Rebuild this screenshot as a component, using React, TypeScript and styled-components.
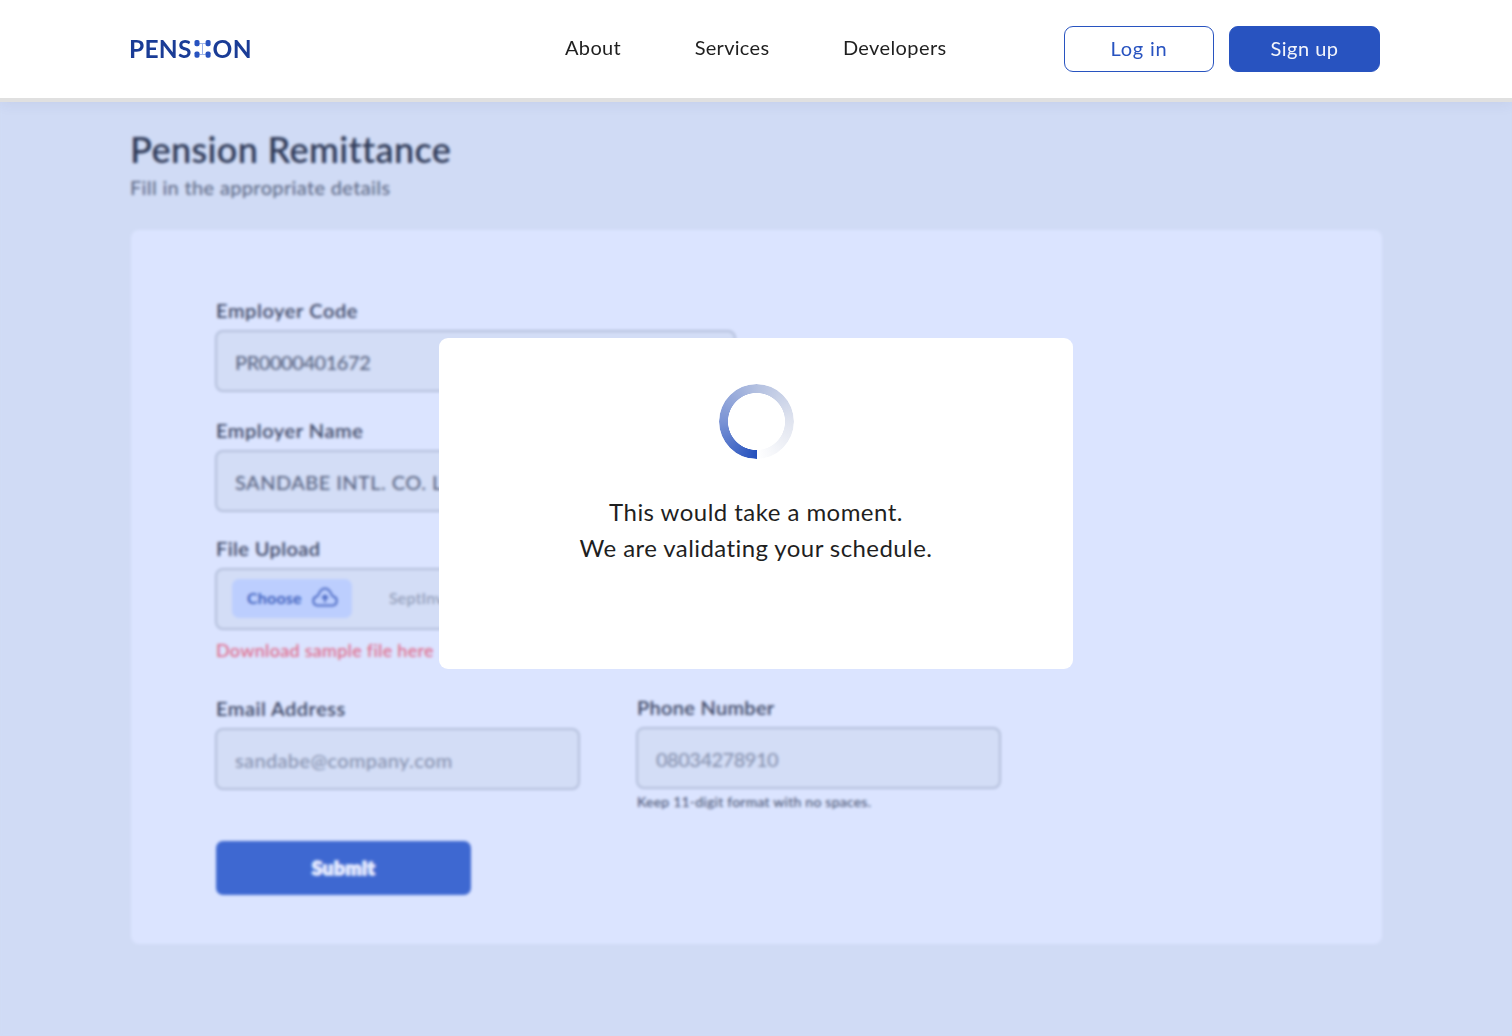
import React from "react";
import styled, { createGlobalStyle } from "styled-components";

const GlobalStyle = createGlobalStyle`
  *, *::before, *::after { box-sizing: border-box; }
  body {
    margin: 0;
    background: #d0dbf5;
    font-family: Lato, "Liberation Sans", sans-serif;
    font-variant-ligatures: none;
    color: #1f1f1f;
  }
  h1, p { margin: 0; }
`;

const Page = styled.div`
  position: relative;
  display: flex;
  flex-direction: column;
  height: 1036px;
  overflow: hidden;
`;

const Header = styled.header`
  position: relative;
  z-index: 2;
  display: flex;
  align-items: center;
  flex: none;
  height: 98px;
  padding: 0 132px 0 129px;
  background: #fff;
  box-shadow: 0 4px 0 #e0e0e0, 0 5px 14px rgba(60, 70, 110, 0.09);
`;

const Logo = styled.a`
  display: flex;
  align-items: center;
  flex: 0 0 436px;
  padding-bottom: 1px;
  font-size: 24.5px;
  line-height: 30px;
  font-weight: 700;
  letter-spacing: 0.3px;
  color: #1a3c96;
`;

const LogoMark = styled.svg`
  width: 17px;
  height: 18px;
  margin: 1px 1.5px 0 2.3px;
`;

const Nav = styled.nav`
  display: flex;
  gap: 73.5px;
  padding-bottom: 5px;
`;

const NavLink = styled.a<{ $track: number }>`
  font-size: 20px;
  line-height: 24px;
  letter-spacing: ${(p) => p.$track}px;
`;

const Actions = styled.div`
  display: flex;
  gap: 15px;
  margin-left: auto;
`;

const HeaderButton = styled.button<{ $primary?: boolean }>`
  width: ${(p) => (p.$primary ? 151 : 150)}px;
  height: 46px;
  padding: 0 0 3px;
  border: 1px solid #2853c0;
  border-radius: 9px;
  background: ${(p) => (p.$primary ? "#2853c0" : "#fff")};
  color: ${(p) => (p.$primary ? "#f3f5fb" : "#2853c0")};
  font: 400 20px/24px Lato, sans-serif;
  letter-spacing: ${(p) => (p.$primary ? 0.5 : 0.8)}px;
`;

const Main = styled.main`
  flex: 1;
  padding: 29px 130px 0 131px;
`;

const Title = styled.h1`
  margin-left: -1px;
  font-size: 36px;
  line-height: 44px;
  font-weight: 600;
  letter-spacing: 0.35px;
  color: #303b59;
`;

const Subtitle = styled.p`
  margin: 4px 0 31px -1px;
  font-size: 20px;
  line-height: 24px;
  font-weight: 500;
  letter-spacing: 0.33px;
  color: #606b88;
`;

const Panel = styled.form`
  display: flex;
  flex-direction: column;
  align-items: flex-start;
  height: 714px;
  margin-left: -0.5px;
  padding: 68px 85px 0 85.5px;
  border-radius: 8px;
  background: #dbe4ff;
`;

const Field = styled.div<{ $width: number; $gap?: number }>`
  display: flex;
  flex-direction: column;
  width: ${(p) => p.$width}px;
  margin-bottom: ${(p) => p.$gap ?? 0}px;
`;

const Label = styled.label<{ $track: number }>`
  margin-bottom: 8px;
  font-size: 20px;
  line-height: 24px;
  font-weight: 600;
  letter-spacing: ${(p) => p.$track}px;
  color: #3f4967;
`;

const Input = styled.div<{ $track?: number; $placeholder?: boolean }>`
  display: flex;
  align-items: center;
  height: 62px;
  margin-left: -1px;
  padding: 2px 18px 0;
  border: 2px solid #b3beda;
  border-radius: 8px;
  background: #d3ddf6;
  white-space: nowrap;
  font-size: 20px;
  font-weight: 500;
  letter-spacing: ${(p) => p.$track ?? 0}px;
  color: ${(p) => (p.$placeholder ? "#8792af" : "#5a6582")};
`;

const FileInput = styled(Input)`
  padding: 0 15px 1px;
`;

const ChooseButton = styled.span`
  display: flex;
  align-items: center;
  gap: 10px;
  width: 120px;
  height: 39px;
  margin-right: 37px;
  padding: 0 14px 3px 15px;
  border-radius: 7px;
  background: #bccefe;
  font-size: 16px;
  font-weight: 700;
  letter-spacing: 0.2px;
  color: #4061bd;
`;

const FileName = styled.span`
  padding-bottom: 2px;
  font-size: 16px;
  font-weight: 500;
  letter-spacing: 0.2px;
  color: #8d98b4;
`;

const SampleLink = styled.a`
  margin: 9px 0 35px;
  font-size: 18px;
  line-height: 22px;
  font-weight: 500;
  letter-spacing: 0.28px;
  color: #e06888;
`;

const ContactRow = styled.div`
  display: flex;
  gap: 57px;
`;

const PhoneField = styled(Field)`
  margin-top: -1px;
`;

const Hint = styled.p`
  margin-top: 4px;
  font-size: 14px;
  line-height: 17px;
  font-weight: 500;
  letter-spacing: 0.22px;
  color: #4c5776;
`;

const Submit = styled.button`
  width: 255px;
  height: 54px;
  margin-top: 31px;
  padding: 0 0 1px;
  border: 0;
  border-radius: 7px;
  background: #3e68d1;
  color: #e4eaff;
  font: 900 19px/24px Lato, sans-serif;
  letter-spacing: 0.6px;
  -webkit-text-stroke: 1.6px #e4eaff;
`;

const Overlay = styled.div`
  position: absolute;
  inset: 98px 0 0;
  display: flex;
  justify-content: center;
  align-items: flex-start;
  padding-top: 240px;
  backdrop-filter: blur(1.6px);
`;

const Dialog = styled.section`
  display: flex;
  flex-direction: column;
  align-items: center;
  width: 634px;
  height: 331px;
  padding-top: 46px;
  border-radius: 9px;
  background: #fff;
`;

const Spinner = styled.div`
  width: 75px;
  height: 75px;
  margin: 0 0 35px 1px;
  border-radius: 50%;
  background: conic-gradient(from 180deg, #2450bd 0deg, #7a93d5 90deg, #b3c0e0 180deg, #e0e4ef 270deg, #ffffff 360deg);
  mask: radial-gradient(circle, transparent 28.2px, #000 28.8px);
`;

const Message = styled.p<{ $track: number }>`
  font-size: 24px;
  line-height: 36px;
  letter-spacing: ${(p) => p.$track}px;
  color: #1f1f1f;
`;

const CloudUpload = () => (
  <svg width="26" height="20" viewBox="0 0 26 20" fill="none" stroke="#4d6bc4" strokeWidth="2" strokeLinecap="round" strokeLinejoin="round">
    <path d="M5.500 18.500h15a4.600 4.600 0 0 0 .9-9C20 8.800 19.700 7.600 18.700 5.800 17.400 3.200 15.500 1.500 13 1.500S8.600 3.200 7.300 5.800C6.300 7.600 6 8.800 4.600 9.500a4.600 4.600 0 0 0 .9 9Z" />
    <path d="M13 14.500V9M10.600 10.700 13 8.400l2.400 2.300Z" />
  </svg>
);

export default function App() {
  return (
    <>
      <GlobalStyle />
      <Page>
        <Header>
          <Logo>
            PENS
            <LogoMark viewBox="0 0 17 18">
              <path d="M3 3.500H14M3 14.500H14M8.500 3.500V14.500" stroke="#9fb5ea" strokeWidth="1" fill="none" />
              <g fill="#2853c0">
                <rect x="0.500" y="0" width="5" height="6.300" rx="1.800" />
                <rect x="11.600" y="0" width="5" height="6.300" rx="1.800" />
                <rect x="0.500" y="11.400" width="5" height="6.300" rx="1.800" />
                <rect x="11.600" y="11.400" width="5" height="6.300" rx="1.800" />
              </g>
            </LogoMark>
            ON
          </Logo>
          <Nav>
            <NavLink $track={0.35}>About</NavLink>
            <NavLink $track={0.3}>Services</NavLink>
            <NavLink $track={0.4}>Developers</NavLink>
          </Nav>
          <Actions>
            <HeaderButton>Log in</HeaderButton>
            <HeaderButton $primary>Sign up</HeaderButton>
          </Actions>
        </Header>

        <Main>
          <Title>Pension Remittance</Title>
          <Subtitle>Fill in the appropriate details</Subtitle>
          <Panel>
            <Field $width={520} $gap={26}>
              <Label $track={0.6}>Employer Code</Label>
              <Input $track={-0.45}>PR0000401672</Input>
            </Field>
            <Field $width={520} $gap={24}>
              <Label $track={0.55}>Employer Name</Label>
              <Input $track={0.45}>SANDABE INTL. CO. LTD.</Input>
            </Field>
            <Field $width={520}>
              <Label $track={0.4}>File Upload</Label>
              <FileInput>
                <ChooseButton>
                  Choose
                  <CloudUpload />
                </ChooseButton>
                <FileName>SeptInvoice.pdf</FileName>
              </FileInput>
            </Field>
            <SampleLink>Download sample file here</SampleLink>
            <ContactRow>
              <Field $width={364}>
                <Label $track={0.5}>Email Address</Label>
                <Input $track={0.35} $placeholder>sandabe@company.com</Input>
              </Field>
              <PhoneField $width={364}>
                <Label $track={0.3}>Phone Number</Label>
                <Input $track={-0.5} $placeholder>08034278910</Input>
                <Hint>Keep 11-digit format with no spaces.</Hint>
              </PhoneField>
            </ContactRow>
            <Submit type="button">Submit</Submit>
          </Panel>
        </Main>

        <Overlay>
          <Dialog role="dialog">
            <Spinner />
            <Message $track={0.46}>This would take a moment.</Message>
            <Message $track={0.42}>We are validating your schedule.</Message>
          </Dialog>
        </Overlay>
      </Page>
    </>
  );
}
